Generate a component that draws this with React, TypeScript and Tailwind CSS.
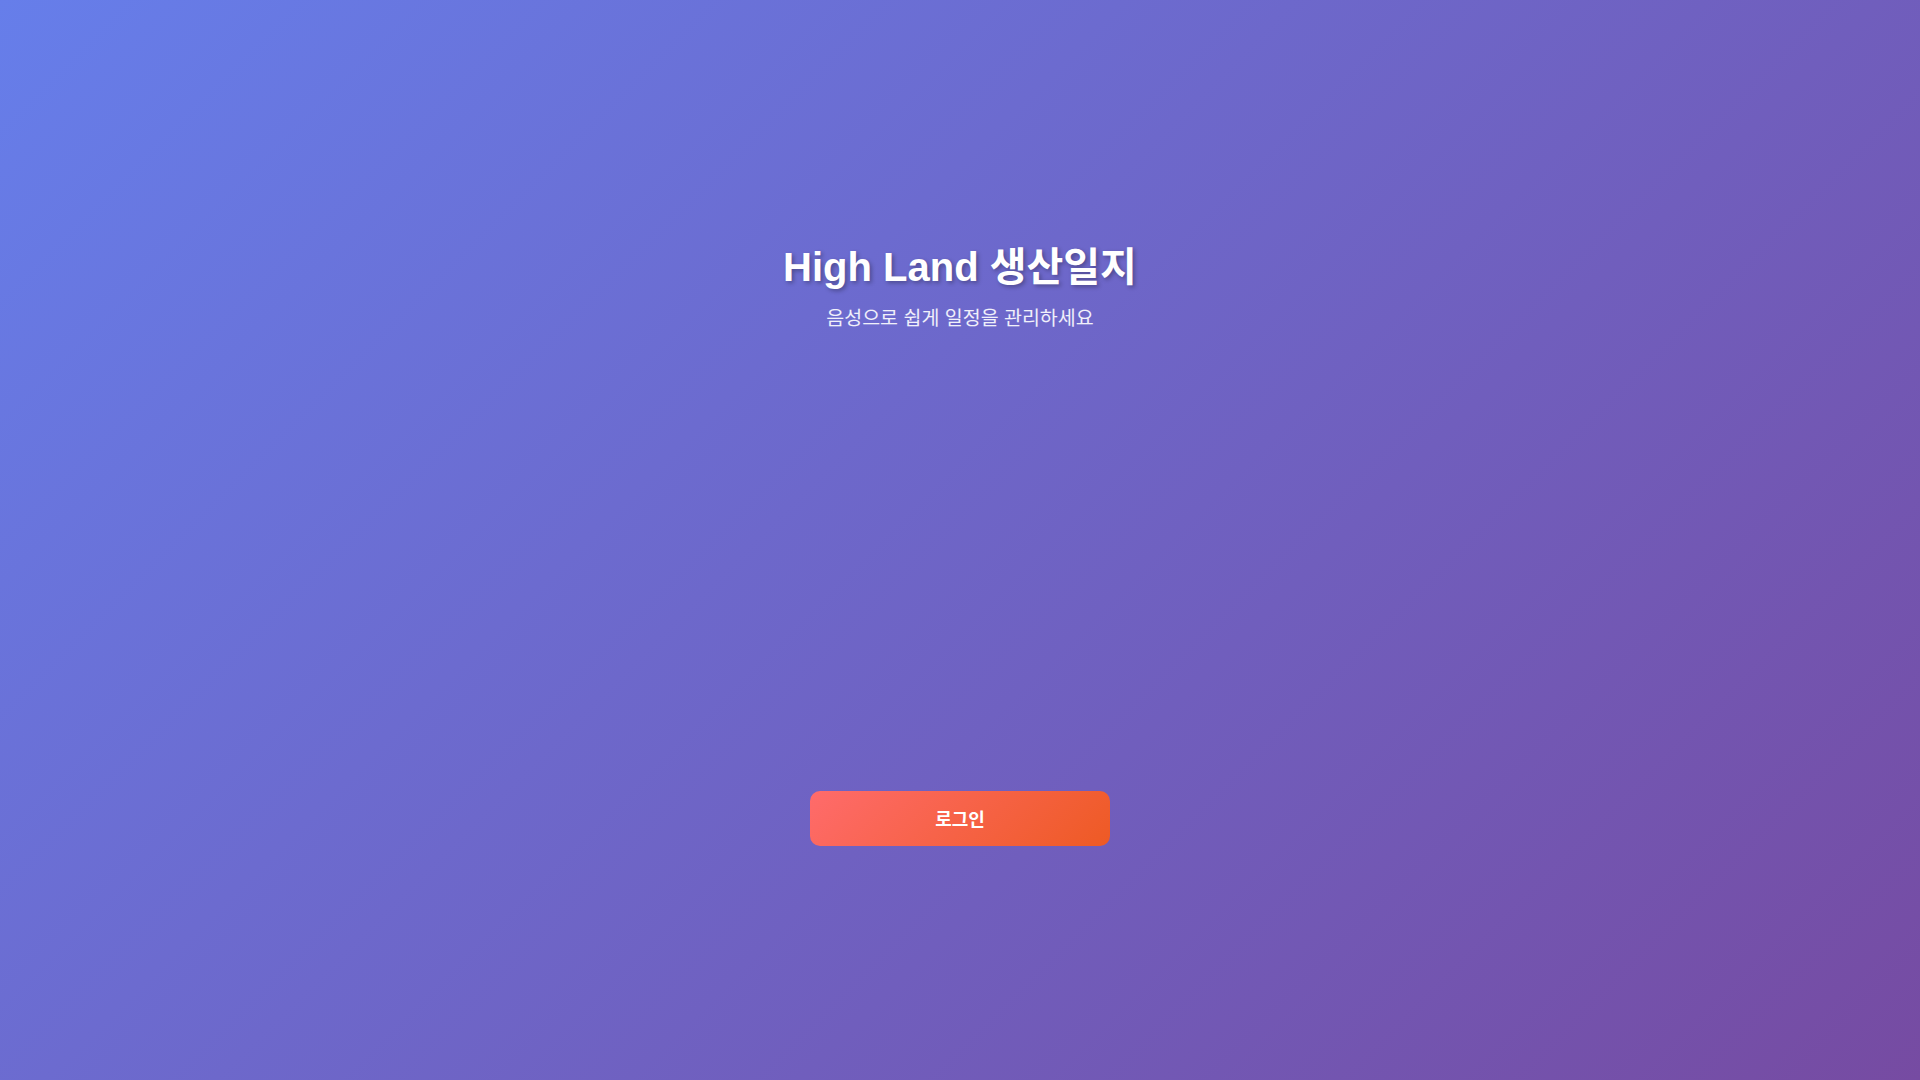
import React from "react";

export default function App() {
  return (
    <div
      className="min-h-screen w-full bg-[linear-gradient(135deg,#667eea_0%,#764ba2_100%)] flex flex-col items-center pt-[243px]"
      style={{ fontFamily: '"Liberation Sans", "Noto Sans CJK KR", Arial, sans-serif' }}
    >
      <h1 className="text-[40px] leading-[48px] font-bold text-white [text-shadow:2px_2px_4px_rgba(0,0,0,0.3)]">
        High Land 생산일지
      </h1>
      <p className="mt-[13px] text-[19.5px] leading-[29px] text-white/90">
        음성으로 쉽게 일정을 관리하세요
      </p>
      <button className="mt-[458px] w-[300px] h-[55px] pt-[4px] rounded-[10px] bg-[linear-gradient(135deg,#ff6b6b_0%,#ee5a24_100%)] text-white text-[18px] font-bold">
        로그인
      </button>
    </div>
  );
}
